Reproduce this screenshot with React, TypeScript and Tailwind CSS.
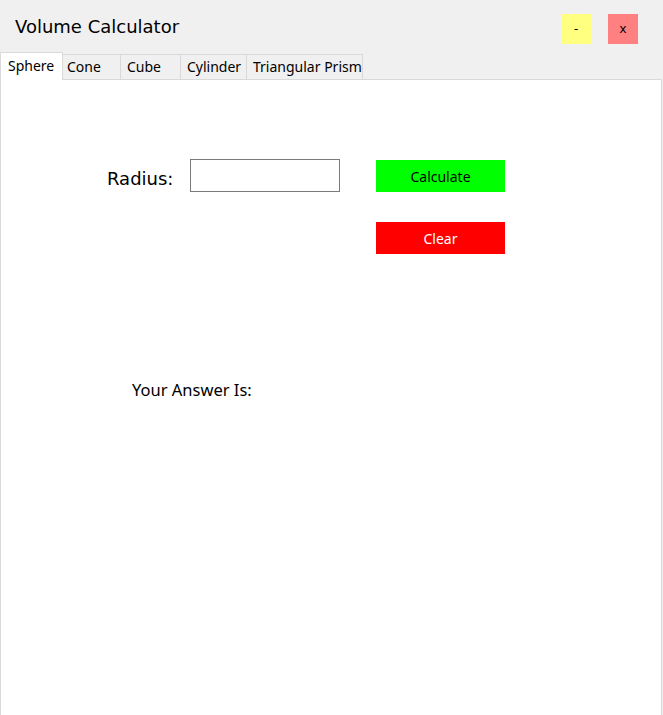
export default function App() {
  const tabs = ["Sphere", "Cone", "Cube", "Cylinder", "Triangular Prism"];
  const widths = ["w-[63px]", "w-[58px]", "w-[60px]", "w-[66px]", "w-[116px]"];
  const pads = ["pl-[7px]", "pl-[4px]", "pl-[6px]", "pl-[6px]", "pl-[6px]"];

  return (
    <div className="w-[663px] h-[715px] bg-[#f0f0f0] flex flex-col overflow-hidden" style={{ fontFamily: '"Noto Sans", sans-serif' }}>
      {/* title bar */}
      <div className="h-[52px] flex items-start shrink-0">
        <div className="pl-[15px] pt-[13px] text-[18px] text-black" style={{ fontFamily: '"DejaVu Sans", sans-serif' }}>
          Volume Calculator
        </div>
        <div className="ml-auto flex gap-[17px] pt-[14px] pr-[25px]">
          <div className="w-[30px] h-[30px] bg-[#ffff80] flex items-center justify-center text-[13px]">-</div>
          <div className="w-[30px] h-[30px] bg-[#ff8080] flex items-center justify-center text-[13px]">x</div>
        </div>
      </div>

      {/* tabs */}
      <div className="flex items-end h-[28px] shrink-0 relative z-10">
        {tabs.map((t, i) =>
          i === 0 ? (
            <div key={t} className={`${widths[i]} h-[28px] bg-white border border-b-0 border-[#d9d9d9] text-[14px] ${pads[i]} pt-[3px] leading-[20px]`}>
              {t}
            </div>
          ) : (
            <div key={t} className={`${widths[i]} h-[26px] bg-[#f0f0f0] border border-l-0 border-[#d9d9d9] text-[14px] ${pads[i]} pt-[2px] leading-[20px]`}>
              {t}
            </div>
          )
        )}
      </div>

      {/* panel */}
      <div className="flex-1 bg-white border border-b-0 border-[#d9d9d9] -mt-px mr-px -mb-[10px]">
        <div className="flex items-start pl-[106px] pt-[79px]">
          <div className="w-[83px] pt-[6px] text-[18px] text-black" style={{ fontFamily: '"DejaVu Sans", sans-serif' }}>
            Radius:
          </div>
          <input className="w-[150px] h-[33px] border border-[#7a7a7a] bg-white outline-none px-1" />
          <div className="ml-[36px] flex flex-col gap-[30px] pt-px">
            <button className="w-[129px] h-[32px] bg-[#00ff00] text-[14px] text-black">Calculate</button>
            <button className="w-[129px] h-[32px] bg-[#ff0000] text-[14px] text-white">Clear</button>
          </div>
        </div>
        <div className="pl-[131px] pt-[124px] text-[16.5px] text-black">Your Answer Is:</div>
      </div>
    </div>
  );
}
